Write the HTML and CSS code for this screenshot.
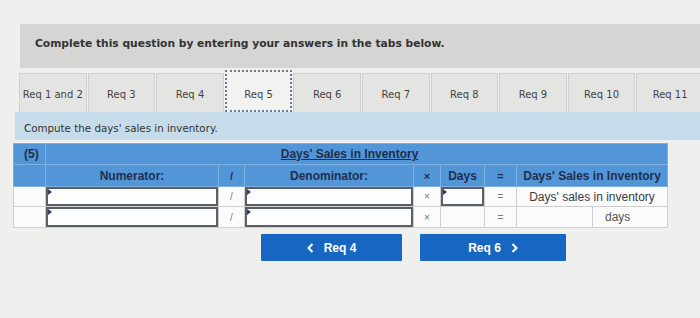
FILE: index.html
```html
<!DOCTYPE html>
<html lang="en">
  <head>
    <meta charset="UTF-8" />
    <meta name="viewport" content="width=device-width, initial-scale=1.0" />
    <title>Days' Sales in Inventory</title>
    <link rel="stylesheet" href="styles.css">
  </head>
  <body>
    <div class="page">
      <div class="prompt">Complete this question by entering your answers in the tabs below.</div>

      <!-- tabs -->
      <div class="tabs">
        <div class="tab">Req 1 and 2</div>
        <div class="tab">Req 3</div>
        <div class="tab">Req 4</div>
        <div class="tab active">Req 5</div>
        <div class="tab">Req 6</div>
        <div class="tab">Req 7</div>
        <div class="tab">Req 8</div>
        <div class="tab">Req 9</div>
        <div class="tab">Req 10</div>
        <div class="tab">Req 11</div>
      </div>

      <div class="instruction">Compute the days' sales in inventory.</div>

      <!-- answer table -->
      <table class="calc">
        <colgroup>
          <col style="width: 32px" />
          <col style="width: 173px" />
          <col style="width: 26px" />
          <col style="width: 169px" />
          <col style="width: 27px" />
          <col style="width: 44px" />
          <col style="width: 32px" />
          <col style="width: 76px" />
          <col style="width: 75px" />
        </colgroup>
        <thead>
          <tr class="head-top">
            <th class="num-label">(5)</th>
            <th colspan="8" class="title"><u>Days' Sales in Inventory</u></th>
          </tr>
          <tr class="head-sub">
            <th></th>
            <th>Numerator:</th>
            <th class="op">/</th>
            <th>Denominator:</th>
            <th class="op">&times;</th>
            <th>Days</th>
            <th class="op">=</th>
            <th colspan="2">Days' Sales in Inventory</th>
          </tr>
        </thead>
        <tbody>
          <tr class="row1">
            <td></td>
            <td class="entry"><input type="text" /></td>
            <td class="op">/</td>
            <td class="entry"><input type="text" /></td>
            <td class="op">&times;</td>
            <td class="entry"><input type="text" /></td>
            <td class="op">=</td>
            <td colspan="2" class="result">Days' sales in inventory</td>
          </tr>
          <tr class="row2">
            <td></td>
            <td class="entry"><input type="text" /></td>
            <td class="op">/</td>
            <td class="entry"><input type="text" /></td>
            <td class="op">&times;</td>
            <td></td>
            <td class="op">=</td>
            <td></td>
            <td class="unit">days</td>
          </tr>
        </tbody>
      </table>

      <div class="nav">
        <button class="nav-btn prev">
          <svg width="7" height="10" viewBox="0 0 7 10"><polyline points="5.5,1 1.5,5 5.5,9" fill="none" stroke="white" stroke-width="2" /></svg>
          Req 4
        </button>
        <button class="nav-btn next">
          Req 6
          <svg width="7" height="10" viewBox="0 0 7 10"><polyline points="1.5,1 5.5,5 1.5,9" fill="none" stroke="white" stroke-width="2" /></svg>
        </button>
      </div>
    </div>
  </body>
</html>
```

FILE: styles.css
```css
* {
  margin: 0;
  padding: 0;
  box-sizing: border-box;
}

body {
  background: #efefed;
  font-family: "DejaVu Sans", Verdana, sans-serif;
  overflow: hidden;
  width: 700px;
  height: 318px;
}

.page {
  padding-top: 24px;
}

.prompt {
  margin-left: 20px;
  height: 44px;
  padding: 13px 0 0 15px;
  background: #d5d5d3;
  color: #333;
  font-size: 10.7px;
  font-weight: bold;
}

.tabs {
  display: flex;
  gap: 1px;
  margin: 4px 0 0 19px;
  height: 40px;
  align-items: flex-end;
}

.tab {
  flex: 0 0 67.6px;
  height: 39px;
  padding-top: 3px;
  background: #e4e4e2;
  border: 1px solid #d0d0ce;
  border-bottom: none;
  display: flex;
  align-items: center;
  justify-content: center;
  font-size: 10px;
  color: #444;
  white-space: nowrap;
}

.tab.active {
  height: 42px;
  padding-top: 7px;
  background: #f2f2f0;
  border: 2px dotted #6a7a94;
}

.instruction {
  margin-left: 15px;
  height: 28px;
  padding: 10px 0 0 9px;
  background: #c6dcea;
  color: #333;
  font-size: 10.3px;
}

.calc {
  margin: 3px 0 0 13px;
  width: 654px;
  table-layout: fixed;
  border-collapse: collapse;
  font-family: "Liberation Sans", Arial, sans-serif;
  font-size: 12px;
}

.calc th {
  background: #5396d8;
  color: #1f2e4c;
  font-weight: bold;
  border: 1px solid #7fb0e2;
  text-align: center;
}

.head-top th {
  height: 21px;
}

.head-top .num-label {
  text-align: left;
  padding-left: 10px;
}

.head-top .title {
  padding-right: 14px;
}

.head-sub th {
  height: 22px;
}

.calc td {
  background: #fbfbfb;
  border: 1px solid #cfcfcf;
  color: #555;
  text-align: center;
}

.row1 td {
  height: 20px;
}

.row2 td {
  height: 21px;
}

.calc td.op {
  font-size: 10px;
  color: #777;
}

.calc th.op {
  font-size: 11px;
}

.calc .entry {
  padding: 0;
  position: relative;
}

.calc .entry::before {
  content: "";
  position: absolute;
  left: 2px;
  top: 2px;
  border-left: 4px solid #2c3e6a;
  border-top: 3px solid transparent;
  border-bottom: 3px solid transparent;
}

.calc input {
  display: block;
  width: 100%;
  height: 100%;
  min-height: 19px;
  border: 2px solid #5a5f68;
  background: #fdfdfd;
}

.calc .result {
  color: #3c3c3c;
}

.calc .unit {
  text-align: left;
  padding-left: 12px;
  color: #555;
}

.nav {
  display: flex;
  margin: 6px 0 0 261px;
  gap: 18px;
}

.nav-btn {
  height: 27px;
  background: #1766c2;
  color: white;
  border: none;
  border-radius: 1px;
  font-family: "Liberation Sans", Arial, sans-serif;
  font-size: 12px;
  font-weight: bold;
  display: flex;
  align-items: center;
  justify-content: center;
  gap: 10px;
}

.nav-btn.prev {
  width: 141px;
}

.nav-btn.next {
  width: 146px;
}
```
